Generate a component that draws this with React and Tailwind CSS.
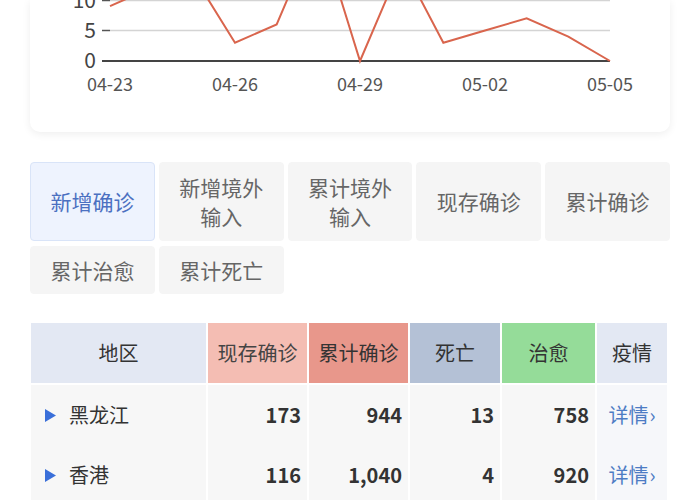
import React from 'react';

const FONT = { fontFamily: '"Noto Sans CJK SC", "Noto Sans", sans-serif' };

// daily new cases 04-23 .. 05-05
const dates = ['04-23', '04-24', '04-25', '04-26', '04-27', '04-28', '04-29', '04-30', '05-01', '05-02', '05-03', '05-04', '05-05'];
const values = [9, 12, 14, 3, 6, 22, 0, 16, 3, 5, 7, 4, 0];

const tabs = [
  { label: ['新增确诊'], active: true },
  { label: ['新增境外', '输入'] },
  { label: ['累计境外', '输入'] },
  { label: ['现存确诊'] },
  { label: ['累计确诊'] },
  { label: ['累计治愈'] },
  { label: ['累计死亡'] },
];

const rows = [
  { name: '黑龙江', now: '173', total: '944', dead: '13', cured: '758' },
  { name: '香港', now: '116', total: '1,040', dead: '4', cured: '920' },
];

function Chart() {
  const x0 = 110;
  const step = 500 / 12;
  const y = (v) => 61 - v * 6.1;
  const points = values.map((v, i) => `${x0 + i * step},${y(v)}`).join(' ');

  return (
    <svg width="640" height="100" viewBox="30 0 640 100" className="block">
      {/* grid */}
      <line x1="110" y1="0.5" x2="610" y2="0.5" stroke="#d4d4d4" strokeWidth="1.5" />
      <line x1="110" y1="30.5" x2="610" y2="30.5" stroke="#d4d4d4" strokeWidth="1.5" />
      <line x1="102" y1="0.5" x2="110" y2="0.5" stroke="#555" strokeWidth="1.5" />
      <line x1="102" y1="30.5" x2="110" y2="30.5" stroke="#555" strokeWidth="1.5" />
      <line x1="102" y1="61" x2="610" y2="61" stroke="#444" strokeWidth="2" />

      <g fill="#444" fontSize="21" textAnchor="end" style={FONT}>
        <text x="96" y="8">10</text>
        <text x="96" y="38">5</text>
        <text x="96" y="68">0</text>
      </g>

      <polyline points={points} fill="none" stroke="#d9654d" strokeWidth="2" strokeLinejoin="miter" />

      <g fill="#555" fontSize="18" textAnchor="middle" style={FONT}>
        {[0, 3, 6, 9, 12].map((i) => (
          <text key={i} x={x0 + i * step} y="91">{dates[i]}</text>
        ))}
      </g>
    </svg>
  );
}

function Tab({ tab, tall }) {
  return (
    <div
      className={`flex flex-col items-center justify-center rounded border text-[21px] leading-[29px] ${tall ? 'h-[79px]' : 'h-[48px]'} ${
        tab.active ? 'bg-[#eef3fe] border-[#d9e4f8] text-[#4b70c1]' : 'bg-[#f5f5f5] border-[#f5f5f5] text-[#666]'
      }`}
    >
      {tab.label.map((l) => (
        <div key={l}>{l}</div>
      ))}
    </div>
  );
}

function Triangle() {
  return (
    <svg width="11" height="13" viewBox="0 0 11 13" className="shrink-0">
      <polygon points="0,0 11,6.5 0,13" fill="#3a6fd9" />
    </svg>
  );
}

export default function App() {
  const head = 'flex items-center justify-center h-[60px] text-[20px] text-[#333]';
  const cell = 'flex items-center justify-end h-[60px] pr-[6px] bg-[#f7f7f7] text-[20px] font-bold text-[#333]';

  return (
    <div className="w-[700px] h-[500px] overflow-hidden bg-white" style={FONT}>
      {/* chart card, top is scrolled off */}
      <div className="ml-[30px] w-[640px] h-[132px] rounded-b-[10px] bg-white shadow-[0_2px_8px_rgba(0,0,0,0.07)]">
        <Chart />
      </div>

      {/* type tabs */}
      <div className="mt-[30px] mx-[30px] grid grid-cols-5 gap-x-1 gap-y-[5px]">
        {tabs.map((t, i) => (
          <Tab key={i} tab={t} tall={i < 5} />
        ))}
      </div>

      {/* region table */}
      <div className="mt-[29px] ml-[31px] grid grid-cols-[175px_99px_99px_90px_93px_70px] gap-x-[2px]">
        <div className={`${head} bg-[#e3e8f3]`}>地区</div>
        <div className={`${head} bg-[#f4bdb3] text-[#444]`}>现存确诊</div>
        <div className={`${head} bg-[#e8978b]`}>累计确诊</div>
        <div className={`${head} bg-[#b4c1d6]`}>死亡</div>
        <div className={`${head} bg-[#95dc99] text-[#2f4a30]`}>治愈</div>
        <div className={`${head} bg-[#e3e8f3]`}>疫情</div>

        <div className="col-span-6 h-[2px]" />

        {rows.map((r) => (
          <React.Fragment key={r.name}>
            <div className="flex items-center h-[60px] pl-[14px] gap-[13px] bg-[#f7f7f7] text-[20px] text-[#333]">
              <Triangle />
              <span>{r.name}</span>
            </div>
            <div className={cell}>{r.now}</div>
            <div className={cell}>{r.total}</div>
            <div className={cell}>{r.dead}</div>
            <div className={cell}>{r.cured}</div>
            <div className="flex items-center justify-center h-[60px] bg-[#f6f7fa] text-[20px] text-[#4d7cc4]">
              详情<span className="ml-[1px] text-[20px] leading-none">›</span>
            </div>
          </React.Fragment>
        ))}
      </div>
    </div>
  );
}
